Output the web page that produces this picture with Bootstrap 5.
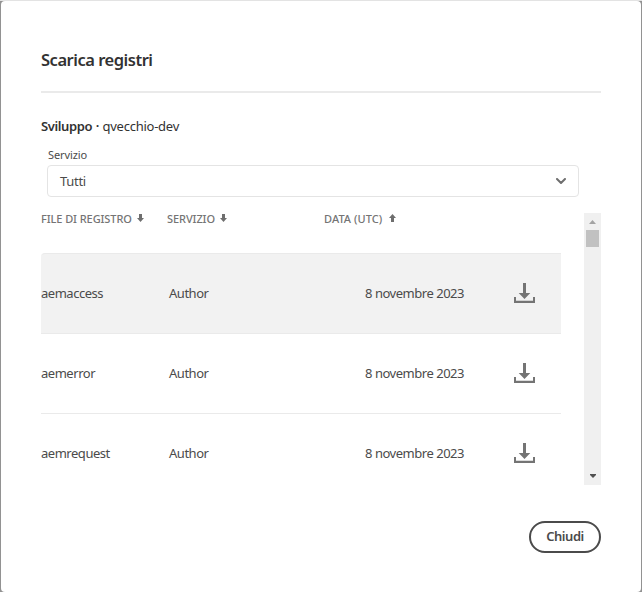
<!DOCTYPE html>
<html lang="it">
<head>
<meta charset="utf-8">
<meta name="viewport" content="width=device-width, initial-scale=1">
<title>Scarica registri</title>
<link href="https://cdn.jsdelivr.net/npm/bootstrap@5.3.0/dist/css/bootstrap.min.css" rel="stylesheet">
<style>
body{height:592px;background:linear-gradient(#e3e3e3 1px,#929292 1px);font-family:"Noto Sans","Open Sans",sans-serif;font-size:13px;line-height:20px;color:#4b4b4b}
.dialog{height:591px;margin:1px 1px 0;padding:0 40px;border-radius:4px}
.dialog-title{height:90px;padding-top:47px;font-size:16.5px;line-height:24px;font-weight:600;color:#323232;letter-spacing:-.48px}
.fit{white-space:nowrap}
.rule{height:2px;background:#eaeaea}
.environment{height:52px;padding-top:23px;color:#323232;letter-spacing:-.25px}
.environment b{font-weight:600;letter-spacing:-.4px}
.environment .dot{margin:0 .5px}
.field{margin:0 22px 0 6px}
.field-label{height:20px;padding-left:1px;font-size:11px;line-height:20px;letter-spacing:-.1px}
.picker{height:32px;border:1px solid #e4e4e4;border-radius:4px;padding:0 12px;width:100%;background:#fff;color:#4b4b4b;letter-spacing:-.3px}
.log-area{height:272px;margin-top:16px}
.log-table{width:520px}
.log-head{height:40px;font-size:11px;line-height:12px;font-weight:500;color:#747474;letter-spacing:-.08px}
.log-head svg{margin-top:1px}
.head-cell{display:flex;gap:5.5px}
.head-date{letter-spacing:.06px;gap:7px}
.log-row{height:80px;border-top:1px solid #eaeaea;padding-bottom:1px;letter-spacing:-.47px}
.log-row.selected{background:#f2f2f2;border-radius:4px 0 0 0}
.c-file{width:128px}.c-service{width:196px}.c-date{width:149px}
.log-head .c-file{width:126px}.log-head .c-service{width:157px}
.track{width:17px;background:#f0f0f0}
.thumb{width:13px;height:17px;background:#c1c1c1}
.arrow{height:17px}
.arrow-down{padding-bottom:2px}
.btn-close-dialog{width:72px;height:32px;margin-top:36px;padding:0 0 1px;border:2px solid #4b4b4b;border-radius:16px;font-size:13px;line-height:27px;font-weight:600;color:#4b4b4b;letter-spacing:-.45px}
svg{display:block;flex:none}
</style>
<script src="https://cdn.jsdelivr.net/npm/bootstrap@5.3.0/dist/js/bootstrap.bundle.min.js"></script>
</head>
<body class="overflow-hidden">
<svg width="0" height="0" class="position-absolute" aria-hidden="true">
<symbol id="download" viewBox="0 0 21 20"><path fill="#747474" d="M9 0h3v10h4.300L10.500 16 4.700 10H9zM0 14h2v3.700h17V14h2v6H0z"/></symbol>
<symbol id="sort" viewBox="0 0 7 8"><path fill="#6e6e6e" d="M2 0h3v4h2L3.500 8 0 4h2z"/></symbol>
</svg>
<main class="dialog bg-white d-flex flex-column">
<h1 class="dialog-title mb-0">Scarica registri</h1>
<div class="rule"></div>
<div class="environment"><b>Sviluppo</b> <b class="dot">·</b> <span>qvecchio-dev</span></div>
<div class="field">
<div class="field-label">Servizio</div>
<button class="picker d-flex align-items-center justify-content-between" type="button"><span>Tutti</span>
<svg width="10" height="7" viewBox="0 0 10 7"><path d="M1 1l4 4 4-4" fill="none" stroke="#6e6e6e" stroke-width="2" stroke-linecap="round" stroke-linejoin="round"/></svg></button>
</div>
<section class="log-area d-flex justify-content-between">
<div class="log-table">
<div class="log-head d-flex">
<div class="c-file head-cell"><span class="fit">FILE DI REGISTRO</span><svg width="7" height="8"><use href="#sort"/></svg></div>
<div class="c-service head-cell"><span class="fit">SERVIZIO</span><svg width="7" height="8"><use href="#sort"/></svg></div>
<div class="head-cell head-date"><span class="fit">DATA (UTC)</span><svg width="7" height="8" viewBox="0 0 7 8"><path fill="#6e6e6e" d="M2 8h3V4h2L3.500 0 0 4h2z"/></svg></div>
</div>
<div class="log-row selected d-flex align-items-center"><div class="c-file">aemaccess</div><div class="c-service">Author</div><div class="c-date">8 novembre 2023</div><svg width="21" height="20"><use href="#download"/></svg></div>
<div class="log-row d-flex align-items-center"><div class="c-file">aemerror</div><div class="c-service">Author</div><div class="c-date">8 novembre 2023</div><svg width="21" height="20"><use href="#download"/></svg></div>
<div class="log-row d-flex align-items-center"><div class="c-file">aemrequest</div><div class="c-service">Author</div><div class="c-date">8 novembre 2023</div><svg width="21" height="20"><use href="#download"/></svg></div>
</div>
<div class="track d-flex flex-column align-items-center">
<div class="arrow d-flex align-items-center"><svg width="7" height="4" viewBox="0 0 7 4"><path fill="#a3a3a3" d="M0 4l3.500-4L7 4z"/></svg></div>
<div class="thumb"></div>
<div class="arrow arrow-down d-flex align-items-center mt-auto"><svg width="6" height="4" viewBox="0 0 6 4"><path fill="#505050" d="M0 0h6v1L3 4 0 1z"/></svg></div>
</div>
</section>
<button class="btn btn-close-dialog align-self-end" type="button">Chiudi</button>
</main>
</body>
</html>
